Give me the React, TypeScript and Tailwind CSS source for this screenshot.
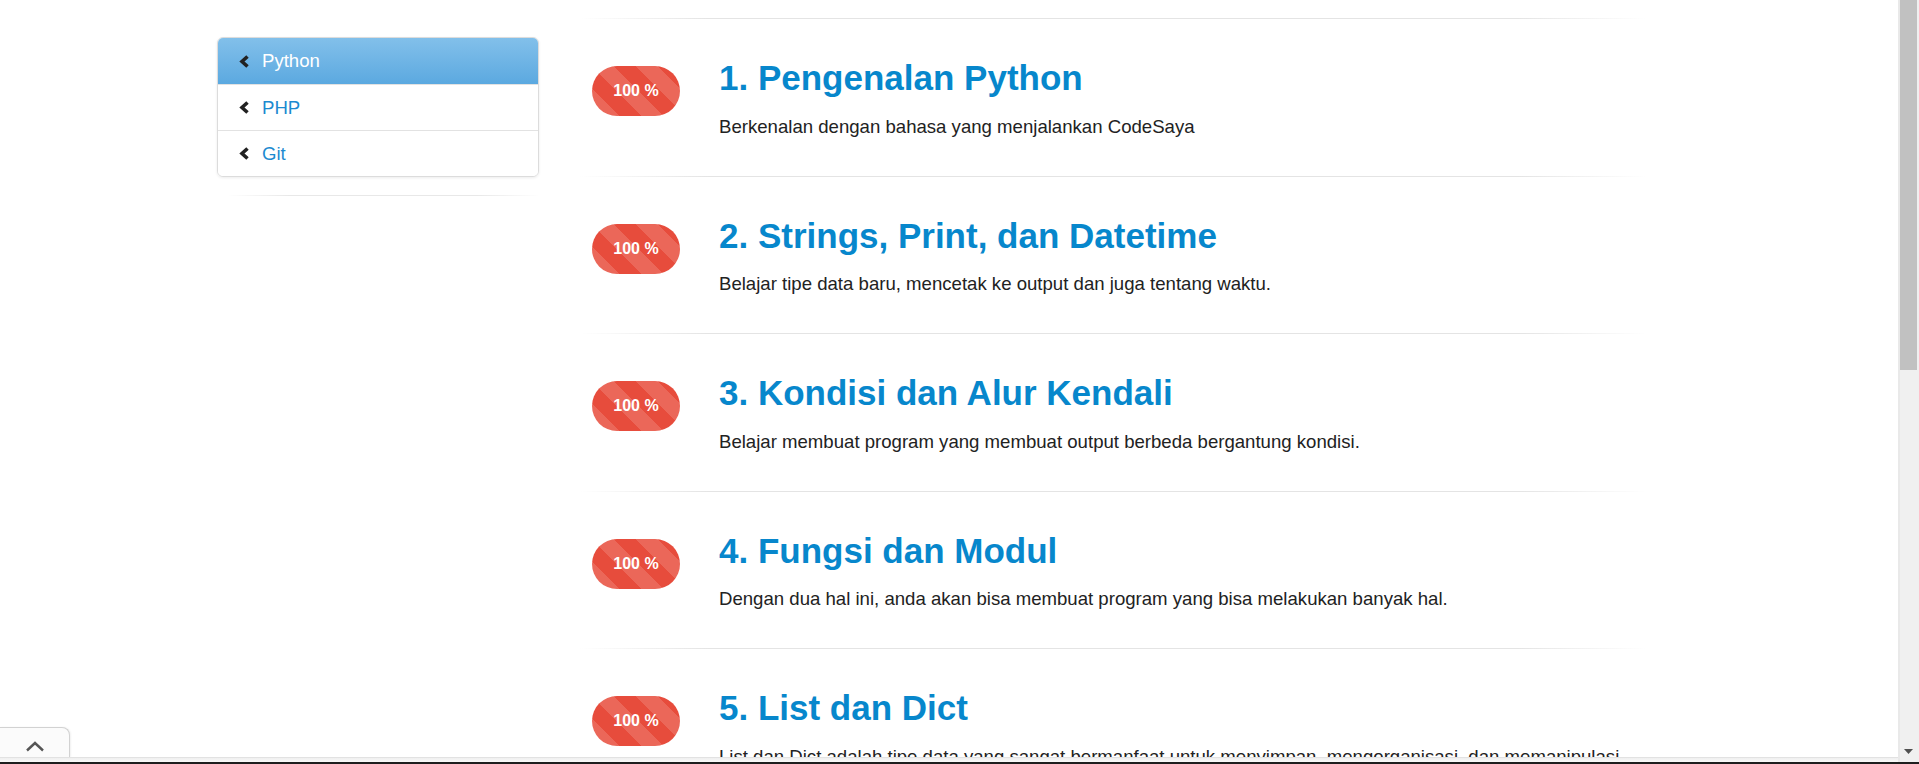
const lessons = [
  {
    title: "1. Pengenalan Python",
    desc: "Berkenalan dengan bahasa yang menjalankan CodeSaya",
  },
  {
    title: "2. Strings, Print, dan Datetime",
    desc: "Belajar tipe data baru, mencetak ke output dan juga tentang waktu.",
  },
  {
    title: "3. Kondisi dan Alur Kendali",
    desc: "Belajar membuat program yang membuat output berbeda bergantung kondisi.",
  },
  {
    title: "4. Fungsi dan Modul",
    desc: "Dengan dua hal ini, anda akan bisa membuat program yang bisa melakukan banyak hal.",
  },
  {
    title: "5. List dan Dict",
    desc: "List dan Dict adalah tipe data yang sangat bermanfaat untuk menyimpan, mengorganisasi, dan memanipulasi",
  },
];

const courses = [
  { name: "Python", active: true },
  { name: "PHP", active: false },
  { name: "Git", active: false },
];

function ChevronLeft() {
  return (
    <svg width="11" height="13" viewBox="0 0 11 13" className="shrink-0">
      <polyline points="8.5,1.5 3,6.5 8.5,11.5" fill="none" stroke="#222" strokeWidth="3.6" />
    </svg>
  );
}

function Badge() {
  return (
    <div className="mt-[7px] flex h-[50px] w-[88px] shrink-0 items-center justify-center rounded-full bg-[#e74c3c] bg-[linear-gradient(45deg,rgba(255,255,255,0.15)_25%,transparent_25%,transparent_50%,rgba(255,255,255,0.15)_50%,rgba(255,255,255,0.15)_75%,transparent_75%,transparent)] bg-size-[44px_44px] text-[16px] font-bold text-white">
      100 %
    </div>
  );
}

function Divider() {
  return <div className="h-px bg-[linear-gradient(to_right,transparent,#e4e4e4_12%,#e4e4e4_88%,transparent)]" />;
}

export default function App() {
  return (
    <div className="flex h-[764px] w-[1919px] flex-col overflow-hidden bg-white font-['Liberation_Sans',Arial,sans-serif]">
      <div className="flex min-h-0 flex-1">
        <div className="relative flex-1 overflow-hidden">
          <div className="flex pl-[217px] pt-[18px]">
            {/* sidebar */}
            <aside className="mt-[19px] w-[322px] shrink-0">
              <div className="overflow-hidden rounded-[6px] border border-[#dcdcdc] shadow-[0_1px_3px_rgba(0,0,0,0.08)]">
                {courses.map((c) => (
                  <div
                    key={c.name}
                    className={
                      c.active
                        ? "flex h-[46px] items-center gap-[12px] bg-linear-to-b from-[#82c0ea] to-[#5ba9e0] pl-[21px] text-[18.6px] text-white"
                        : "flex h-[46px] items-center gap-[12px] border-t border-[#e2e2e2] bg-white pl-[21px] text-[18.6px] text-[#1c8ad0]"
                    }
                  >
                    <ChevronLeft />
                    <span>{c.name}</span>
                  </div>
                ))}
              </div>
              <div className="ml-[10px] mt-[18px] h-px w-[313px] bg-[linear-gradient(to_right,transparent,#e8e8e8_20%,#e8e8e8_80%,transparent)]" />
            </aside>

            {/* lessons */}
            <main className="ml-[41px] w-[1066px] shrink-0">
              {lessons.map((l) => (
                <div key={l.title} className="h-[157.5px]">
                  <Divider />
                  <div className="flex items-start gap-[39px] pl-[12px] pt-[40px]">
                    <Badge />
                    <div>
                      <h2 className="text-[35px] font-bold leading-[1.1] text-[#0787cc]">{l.title}</h2>
                      <p className="mt-[16px] text-[18.6px] leading-[26px] text-[#222]">{l.desc}</p>
                    </div>
                  </div>
                </div>
              ))}
            </main>
          </div>

          {/* bottom bar with scroll-to-top tab */}
          <div className="absolute bottom-0 left-0 right-0">
            <div className="flex h-[30px] w-[70px] items-center justify-center rounded-tr-[8px] border-r border-t border-[#d2d2d2] bg-[#fbfbfb] pt-[7px] shadow-[1px_0_2px_rgba(0,0,0,0.06)]">
              <svg width="20" height="12" viewBox="0 0 20 12">
                <polyline points="2,10.5 10,3 18,10.5" fill="none" stroke="#555" strokeWidth="2.4" />
              </svg>
            </div>
            <div className="h-[5px] border-t border-[#e2e2e2] bg-linear-to-b from-[#efefef] to-[#f9f9f9]" />
          </div>
        </div>

        {/* scrollbar */}
        <div className="flex w-[21px] shrink-0 flex-col border-l-2 border-[#e9e9e9] bg-[#f0f0f0]">
          <div className="h-[370px] w-[17px] bg-[#c1c1c1]" />
          <div className="flex-1" />
          <div className="mb-[8px] flex justify-center pr-[2px]">
            <svg width="9" height="5" viewBox="0 0 9 5">
              <polygon points="0,0 9,0 4.5,5" fill="#505050" />
            </svg>
          </div>
        </div>
      </div>
      <div className="h-[2px] bg-[#1e1e1e]" />
    </div>
  );
}
